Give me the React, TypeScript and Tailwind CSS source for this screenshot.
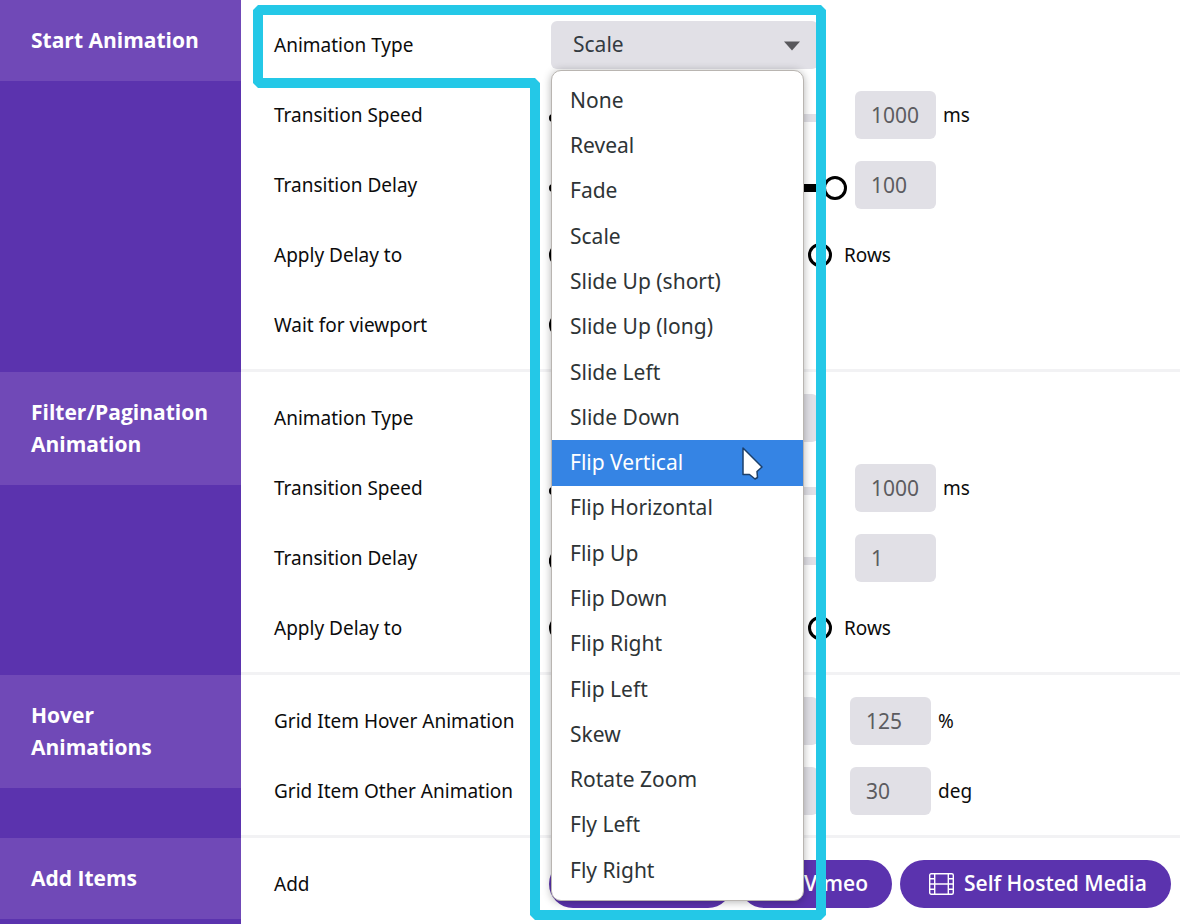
import type { ReactNode } from "react"

const PRESETS = [
  "None",
  "Reveal",
  "Fade",
  "Scale",
  "Slide Up (short)",
  "Slide Up (long)",
  "Slide Left",
  "Slide Down",
  "Flip Vertical",
  "Flip Horizontal",
  "Flip Up",
  "Flip Down",
  "Flip Right",
  "Flip Left",
  "Skew",
  "Rotate Zoom",
  "Fly Left",
  "Fly Right",
]

function Section({ title, children }: { title: string; children: ReactNode }) {
  return (
    <section className="group flex last:grow">
      <div className="w-[241px] shrink-0 bg-[#5b33ae]">
        <h2 className="bg-[#7049b7] pt-6 pr-7 pb-[25px] pl-[31px] font-['Open_Sans',sans-serif] text-[21px]/8 font-bold text-white">
          {title}
        </h2>
      </div>
      <div className="min-w-0 grow border-b-3 border-[#f2f2f4] pt-[11px] pb-[9px] pl-[33px] group-first:pt-2.5 group-last:border-b-0">
        {children}
      </div>
    </section>
  )
}

function Row({ label, htmlFor, children }: { label: string; htmlFor?: string; children: ReactNode }) {
  return (
    <div className="flex h-[70px] items-center">
      <label htmlFor={htmlFor} className="w-[275px] shrink-0">
        {label}
      </label>
      {children}
    </div>
  )
}

function SelectBox({ id, value, children }: { id: string; value: string; children?: ReactNode }) {
  return (
    <div className="relative mr-8 ml-0.5 w-[267px] shrink-0">
      <select
        id={id}
        defaultValue={value}
        className="block h-12 w-full appearance-none rounded-md bg-[#e1e0e6] pl-[22px] text-[21px] text-[#333a41] outline-none"
      >
        {PRESETS.map((name) => (
          <option key={name}>{name}</option>
        ))}
      </select>
      <svg className="pointer-events-none absolute top-5 right-[17px]" width="18" height="10" viewBox="0 0 18 10">
        <path d="M1 .5h16L9 9.5z" fill="#58585c" />
      </svg>
      {children}
    </div>
  )
}

function Slider({ id, value }: { id: string; value: number }) {
  return (
    <div className="relative mt-1.5 mr-2 flex h-6 w-[298px] shrink-0 items-center">
      <div className="h-2 w-[273px] overflow-hidden rounded-full bg-[#e1e0e6]">
        <div className="h-full bg-black" style={{ width: `${Math.max(value, 4)}%` }} />
      </div>
      <input
        id={id}
        type="range"
        defaultValue={value}
        className="absolute inset-0 w-full appearance-none bg-transparent [&::-webkit-slider-thumb]:size-6 [&::-webkit-slider-thumb]:appearance-none [&::-webkit-slider-thumb]:rounded-full [&::-webkit-slider-thumb]:border-3 [&::-webkit-slider-thumb]:border-black [&::-webkit-slider-thumb]:bg-white"
      />
    </div>
  )
}

function NumberBox({ label, value, unit }: { label: string; value: string; unit?: string }) {
  return (
    <label className="flex items-center gap-[7px]">
      <input
        type="text"
        aria-label={label}
        defaultValue={value}
        className="h-12 w-[81px] rounded-md bg-[#e1e0e6] px-4 text-[21px] text-[#5c5c60] outline-none"
      />
      {unit}
    </label>
  )
}

function Radio({ id, name, label }: { id?: string; name: string; label?: string }) {
  return (
    <input
      id={id}
      type="radio"
      name={name}
      aria-label={label}
      className="size-6 shrink-0 appearance-none rounded-full border-3 border-black bg-white"
    />
  )
}

function DelayTarget({ id }: { id: string }) {
  return (
    <>
      <div className="flex w-[259px] shrink-0">
        <Radio id={id} name={id} label="Items" />
      </div>
      <label className="flex items-center gap-3">
        <Radio name={id} />
        Rows
      </label>
    </>
  )
}

function PresetMenu() {
  return (
    <ul
      role="listbox"
      aria-label="Animation Type"
      className="absolute top-[49px] left-0 z-10 flex h-[831px] w-[253px] flex-col rounded-[10px] border border-[#b9b5b1] bg-white py-[7px] text-[21px] text-[#2e3436] shadow-[0_1px_8px_rgba(0,0,0,0.3)]"
    >
      {PRESETS.map((name) => (
        <li
          key={name}
          role="option"
          aria-selected={name === "Flip Vertical"}
          className="relative flex flex-1 items-center pl-[18px] aria-selected:bg-[#3584e4] aria-selected:text-white"
        >
          {name}
          {name === "Flip Vertical" && <Cursor />}
        </li>
      ))}
    </ul>
  )
}

function Cursor() {
  return (
    <svg className="absolute top-1.5 right-10" width="22" height="35" viewBox="0 0 22 35">
      <path
        d="M2 2V28.500H8.500L14 33L16.500 31.500L16 25.500L21 21Z"
        fill="#fff"
        stroke="#1c3f69"
        strokeWidth="1.5"
        strokeLinejoin="round"
      />
    </svg>
  )
}

function FilmIcon() {
  return (
    <svg width="25" height="22" viewBox="0 0 25 22" fill="none" stroke="currentColor" strokeWidth="1.4">
      <rect x=".7" y=".7" width="23.600" height="20.600" rx="1.500" />
      <path d="M5.700 .7v20.600M19.300 .7v20.600M5.700 11h13.600" />
      <path d="M.7 5.800h5M.7 11h5M.7 16.200h5M19.300 5.800h5M19.300 11h5M19.300 16.200h5" />
    </svg>
  )
}

// Callout line drawn round the type row and its open menu
function Callout() {
  return (
    <svg className="pointer-events-none absolute top-0 left-0 z-20" width="830" height="924" viewBox="0 0 830 924">
      <path
        d="M258 10H821V915H535V83H258Z"
        fill="none"
        stroke="#24c8e7"
        strokeWidth="10"
        strokeLinejoin="bevel"
      />
    </svg>
  )
}

export default function App() {
  return (
    <main className="relative flex min-h-screen flex-col bg-white font-['Noto_Sans',sans-serif] text-[19px] text-[#0c0c0c]">
      <Section title="Start Animation">
        <Row label="Animation Type" htmlFor="start-type">
          <SelectBox id="start-type" value="Scale">
            <PresetMenu />
          </SelectBox>
        </Row>
        <Row label="Transition Speed" htmlFor="start-speed">
          <Slider id="start-speed" value={20} />
          <NumberBox label="Transition Speed" value="1000" unit="ms" />
        </Row>
        <Row label="Transition Delay" htmlFor="start-delay">
          <Slider id="start-delay" value={100} />
          <NumberBox label="Transition Delay" value="100" />
        </Row>
        <Row label="Apply Delay to" htmlFor="start-apply">
          <DelayTarget id="start-apply" />
        </Row>
        <Row label="Wait for viewport" htmlFor="start-wait">
          <Radio id="start-wait" name="start-wait" />
        </Row>
      </Section>

      <Section title="Filter/Pagination Animation">
        <Row label="Animation Type" htmlFor="filter-type">
          <SelectBox id="filter-type" value="Scale" />
        </Row>
        <Row label="Transition Speed" htmlFor="filter-speed">
          <Slider id="filter-speed" value={20} />
          <NumberBox label="Transition Speed" value="1000" unit="ms" />
        </Row>
        <Row label="Transition Delay" htmlFor="filter-delay">
          <Slider id="filter-delay" value={0} />
          <NumberBox label="Transition Delay" value="1" />
        </Row>
        <Row label="Apply Delay to" htmlFor="filter-apply">
          <DelayTarget id="filter-apply" />
        </Row>
      </Section>

      <Section title="Hover Animations">
        <Row label="Grid Item Hover Animation" htmlFor="hover-item">
          <SelectBox id="hover-item" value="None" />
          <NumberBox label="Hover amount" value="125" unit="%" />
        </Row>
        <Row label="Grid Item Other Animation" htmlFor="hover-other">
          <SelectBox id="hover-other" value="None" />
          <NumberBox label="Other amount" value="30" unit="deg" />
        </Row>
      </Section>

      <Section title="Add Items">
        <Row label="Add">
          <div className="flex gap-2 font-['Open_Sans',sans-serif] text-[21px] font-semibold text-white">
            <button type="button" aria-label="YouTube" className="h-12 w-[183px] rounded-full bg-[#5b33ae]" />
            <button type="button" className="h-12 w-[152px] rounded-full bg-[#5b33ae] pr-6 text-right">
              Vimeo
            </button>
            <button
              type="button"
              className="flex h-12 items-center gap-2.5 rounded-full bg-[#5b33ae] pr-6 pl-[29px] whitespace-nowrap"
            >
              <FilmIcon />
              Self Hosted Media
            </button>
          </div>
        </Row>
      </Section>

      <Callout />
    </main>
  )
}
